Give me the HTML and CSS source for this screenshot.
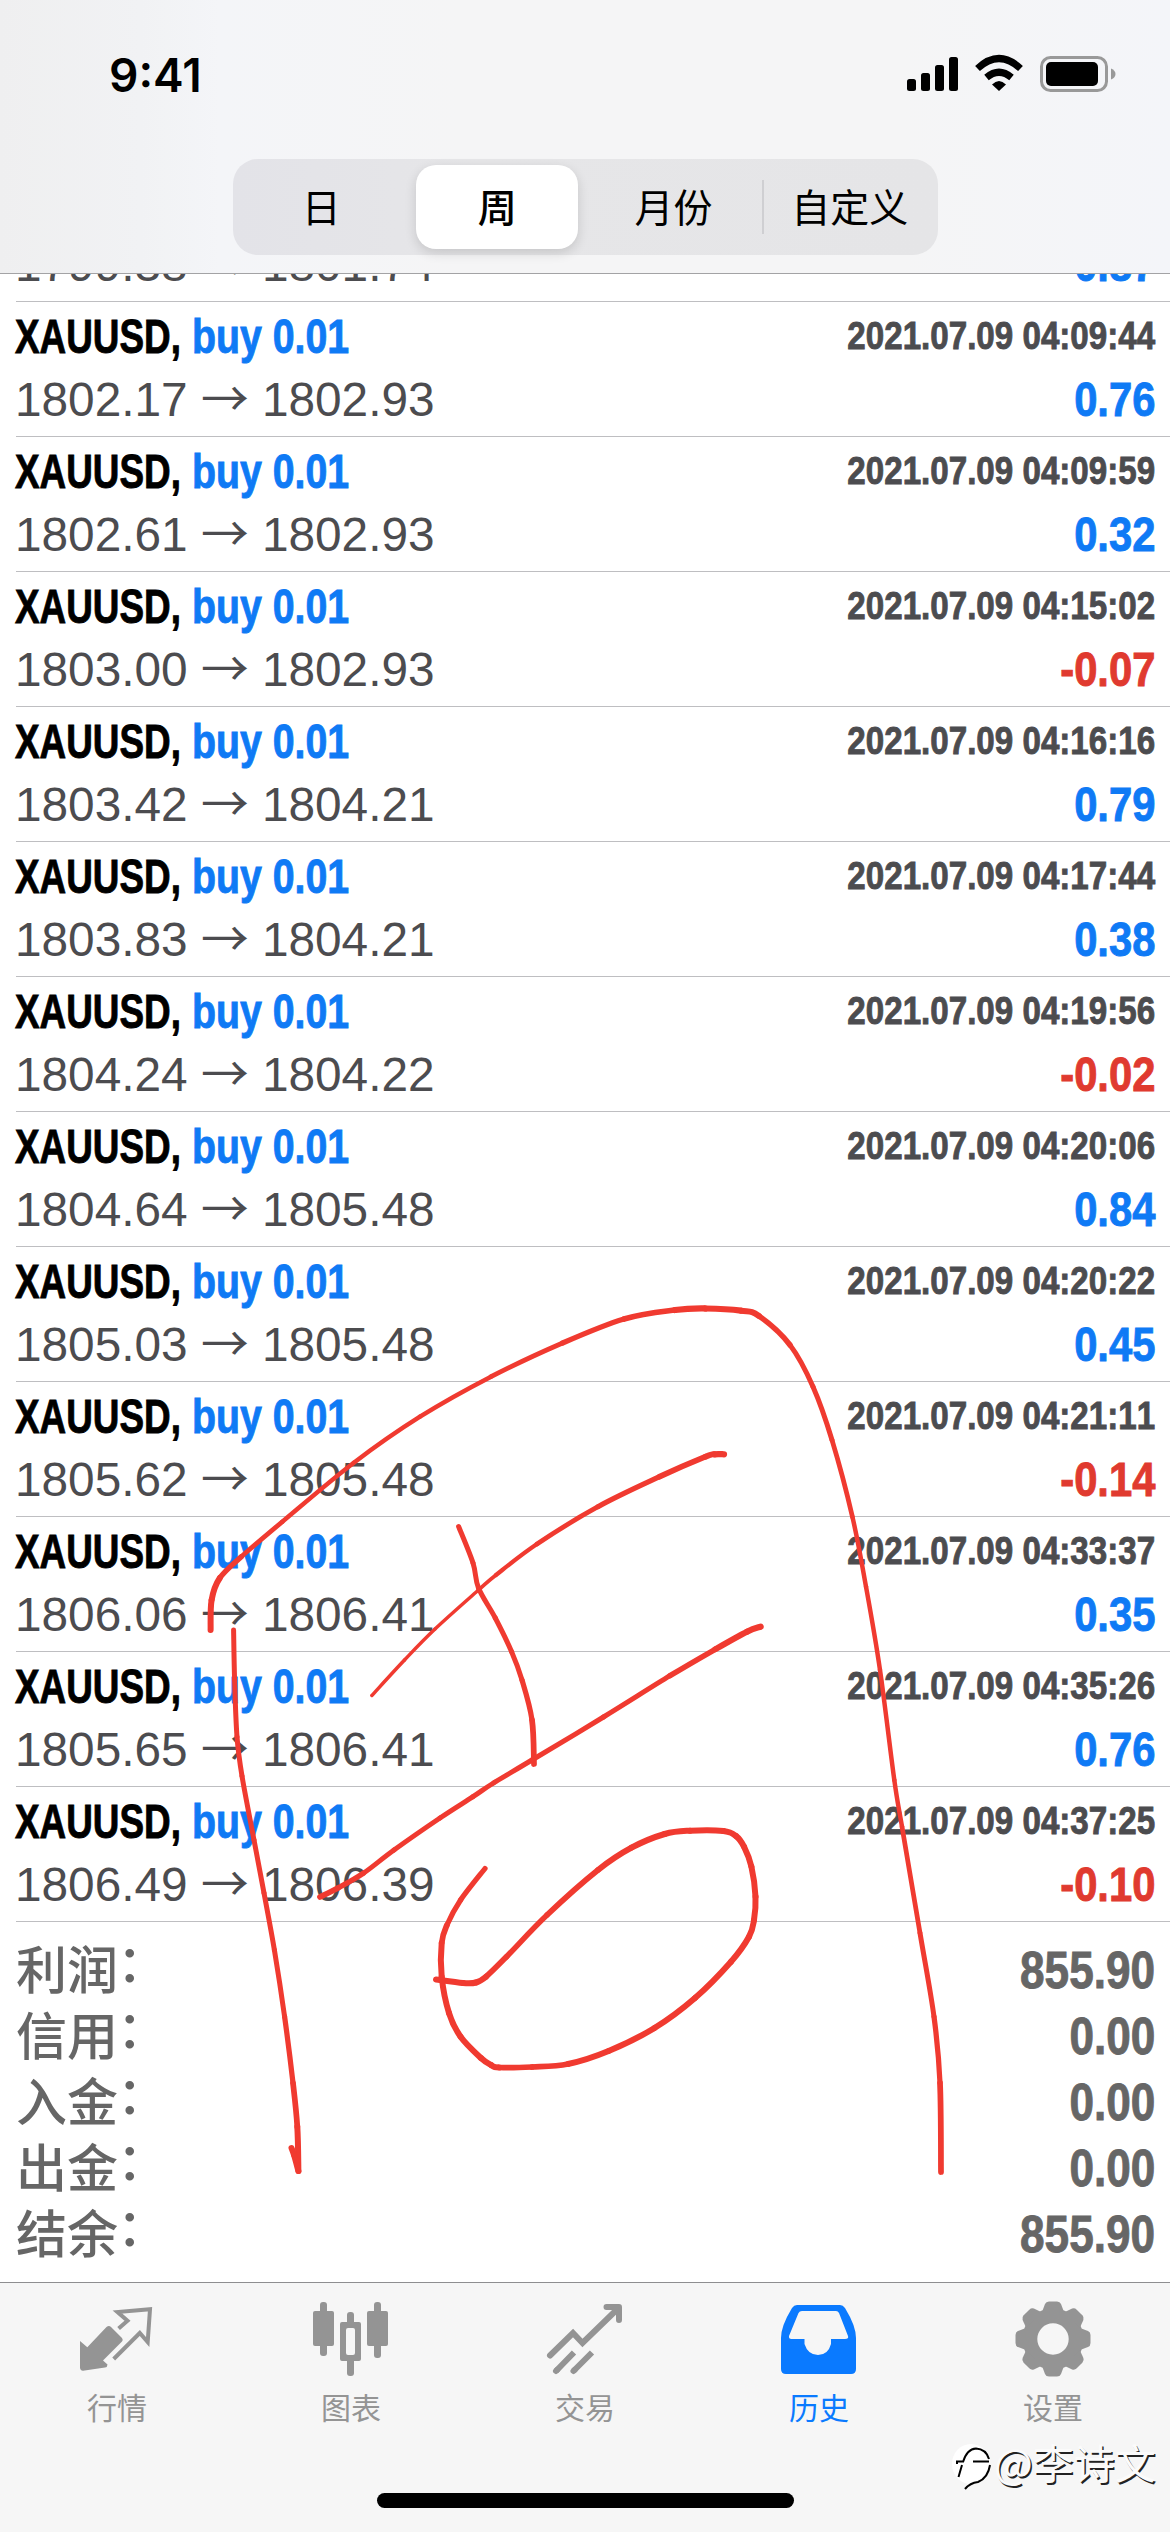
FILE: index.html
```html
<!DOCTYPE html>
<html lang="zh-CN">
<head>
<meta charset="utf-8">
<title>历史</title>
<link rel="stylesheet" href="styles.css">
</head>
<body>
<div class="screen">
  <header class="top">
    <div class="status">
      <span class="time">9:41</span>
      <svg class="status-icons" viewBox="900 50 220 48" width="220" height="48">
        <rect x="907" y="79" width="9" height="12" rx="2.5"/><rect x="921" y="73" width="9" height="18" rx="2.5"/><rect x="935" y="65" width="9" height="26" rx="2.5"/><rect x="949" y="57" width="9" height="34" rx="2.5"/>
        <path d="M977.500 68.500Q999 48.500 1020.500 68.500M986.500 77.500Q999 67 1011.500 77.500" fill="none" stroke="#000" stroke-width="7"/>
        <path d="M992 84.500Q999 77.500 1006 84.500L999 91Z"/>
        <rect x="1041.500" y="57.500" width="65" height="33" rx="9" fill="none" stroke="#999" stroke-width="3"/>
        <rect x="1046" y="62" width="52" height="24" rx="5"/>
        <path d="M1111 68.500Q1115.500 70.500 1115.500 74T1111 79.500Z" fill="#999"/>
      </svg>
    </div>
    <nav class="segments">
      <span class="seg">日</span><span class="seg on">周</span><span class="seg">月份</span><span class="seg split">自定义</span>
    </nav>
  </header>

  <main class="list">
    <div class="deal"><b class="sym">XAUUSD,</b><b class="side">buy 0.01</b><b class="date">2021.07.09 04:08:17</b><span class="price">1799.38 <i>→</i> 1801.74</span><b class="gain">0.87</b></div>
    <div class="deal"><b class="sym">XAUUSD,</b><b class="side">buy 0.01</b><b class="date">2021.07.09 04:09:44</b><span class="price">1802.17 <i>→</i> 1802.93</span><b class="gain">0.76</b></div>
    <div class="deal"><b class="sym">XAUUSD,</b><b class="side">buy 0.01</b><b class="date">2021.07.09 04:09:59</b><span class="price">1802.61 <i>→</i> 1802.93</span><b class="gain">0.32</b></div>
    <div class="deal"><b class="sym">XAUUSD,</b><b class="side">buy 0.01</b><b class="date">2021.07.09 04:15:02</b><span class="price">1803.00 <i>→</i> 1802.93</span><b class="gain loss">-0.07</b></div>
    <div class="deal"><b class="sym">XAUUSD,</b><b class="side">buy 0.01</b><b class="date">2021.07.09 04:16:16</b><span class="price">1803.42 <i>→</i> 1804.21</span><b class="gain">0.79</b></div>
    <div class="deal"><b class="sym">XAUUSD,</b><b class="side">buy 0.01</b><b class="date">2021.07.09 04:17:44</b><span class="price">1803.83 <i>→</i> 1804.21</span><b class="gain">0.38</b></div>
    <div class="deal"><b class="sym">XAUUSD,</b><b class="side">buy 0.01</b><b class="date">2021.07.09 04:19:56</b><span class="price">1804.24 <i>→</i> 1804.22</span><b class="gain loss">-0.02</b></div>
    <div class="deal"><b class="sym">XAUUSD,</b><b class="side">buy 0.01</b><b class="date">2021.07.09 04:20:06</b><span class="price">1804.64 <i>→</i> 1805.48</span><b class="gain">0.84</b></div>
    <div class="deal"><b class="sym">XAUUSD,</b><b class="side">buy 0.01</b><b class="date">2021.07.09 04:20:22</b><span class="price">1805.03 <i>→</i> 1805.48</span><b class="gain">0.45</b></div>
    <div class="deal"><b class="sym">XAUUSD,</b><b class="side">buy 0.01</b><b class="date">2021.07.09 04:21:11</b><span class="price">1805.62 <i>→</i> 1805.48</span><b class="gain loss">-0.14</b></div>
    <div class="deal"><b class="sym">XAUUSD,</b><b class="side">buy 0.01</b><b class="date">2021.07.09 04:33:37</b><span class="price">1806.06 <i>→</i> 1806.41</span><b class="gain">0.35</b></div>
    <div class="deal"><b class="sym">XAUUSD,</b><b class="side">buy 0.01</b><b class="date">2021.07.09 04:35:26</b><span class="price">1805.65 <i>→</i> 1806.41</span><b class="gain">0.76</b></div>
    <div class="deal"><b class="sym">XAUUSD,</b><b class="side">buy 0.01</b><b class="date">2021.07.09 04:37:25</b><span class="price">1806.49 <i>→</i> 1806.39</span><b class="gain loss">-0.10</b></div>
    <section class="totals">
      <div class="total"><span>利润<em>：</em></span><b>855.90</b></div>
      <div class="total"><span>信用<em>：</em></span><b>0.00</b></div>
      <div class="total"><span>入金<em>：</em></span><b>0.00</b></div>
      <div class="total"><span>出金<em>：</em></span><b>0.00</b></div>
      <div class="total"><span>结余<em>：</em></span><b>855.90</b></div>
    </section>
  </main>

  <footer class="tabs">
    <div class="tab">
      <svg viewBox="72 2295 90 90"><path fill="currentColor" d="M80 2341L87.300 2347.300L106.500 2327Q109 2325 111 2327L122 2338Q123.500 2340 122 2341.500L103 2360.500L107.500 2364.500Q107.500 2367 105 2367.500L83 2370.700Q80 2370.500 80 2367.500Z"/><path d="M118.600 2328.500L127.500 2320.700L117.500 2312L150 2309.300L147.700 2342L139.800 2333L113.700 2359" fill="none" stroke="currentColor" stroke-width="4"/></svg>
      行情
    </div>
    <div class="tab">
      <svg viewBox="306 2295 90 90" fill="currentColor"><rect x="313" y="2311" width="21" height="35" rx="2"/><rect x="320" y="2302" width="7" height="54" rx="3"/><path fill-rule="evenodd" d="M342 2322H359Q361 2322 361 2324V2359Q361 2361 359 2361H342Q340 2361 340 2359V2324Q340 2322 342 2322ZM348 2328Q346 2328 346 2330V2353Q346 2355 348 2355H353Q355 2355 355 2353V2330Q355 2328 353 2328Z"/><rect x="347" y="2312" width="7" height="14" rx="3"/><rect x="347" y="2357" width="7" height="19" rx="3"/><rect x="367" y="2311" width="21" height="35" rx="2"/><rect x="374" y="2302" width="7" height="56" rx="3"/></svg>
      图表
    </div>
    <div class="tab">
      <svg viewBox="540 2295 90 90" fill="none" stroke="currentColor" stroke-width="6"><path stroke-linecap="round" d="M550 2355.500L573 2333L582.500 2343L618 2308.500"/><path stroke-linecap="round" stroke-linejoin="round" d="M606.500 2307H619V2320"/><path d="M556 2371L574 2352.500M573.500 2371L592 2352.500"/><path stroke-linecap="round" d="M556 2371l1-1M573.500 2371l1-1"/></svg>
      交易
    </div>
    <div class="tab active">
      <svg viewBox="774 2295 90 90" fill="currentColor"><path fill-rule="evenodd" d="M797 2305H840Q843 2305 845 2308Q856 2326 856 2338V2369Q856 2374 851 2374H786Q781 2374 781 2369V2338Q781 2326 792 2308Q794 2305 797 2305ZM802 2311Q799.500 2311 798.500 2313L789 2336Q788.500 2339 791.500 2339H804.500V2344Q808 2355 818 2355T831 2344V2339H845Q849 2339 848 2336L839 2313Q838 2311 836 2311Z"/></svg>
      历史
    </div>
    <div class="tab">
      <svg viewBox="-45 -44 90 90" fill="currentColor"><path fill-rule="evenodd" d="M-30.500 0A30.500 30.500 0 1 0 30.500 0A30.500 30.500 0 1 0 -30.500 0ZM-15.700 0A15.700 15.700 0 1 1 15.700 0A15.700 15.700 0 1 1 -15.700 0Z"/><g id="teeth"><path id="tooth" d="M-11 -27L-8 -35Q-7 -37.500 -4 -37.500H4Q7 -37.500 8 -35L11 -27Z"/><use href="#tooth" transform="rotate(45)"/><use href="#tooth" transform="rotate(90)"/><use href="#tooth" transform="rotate(135)"/></g><use href="#teeth" transform="rotate(180)"/></svg>
      设置
    </div>
    <div class="home"></div>
  </footer>

  <svg class="ink" id="ink" viewBox="0 0 1170 2532" width="1170" height="2532"></svg>

  <div class="mark">
    <svg viewBox="950 2445 44 50" width="44" height="50"><ellipse cx="972" cy="2466" rx="19" ry="20" fill="#fff"/><path d="M964 2464Q968 2451 977 2450.500Q987 2451 990 2461M974 2463.500H990M991 2467Q989 2480 979 2484Q971 2485 966 2491M958 2466V2463.500H965M963 2467L959.500 2479" fill="none" stroke="#000" stroke-width="2"/></svg>
    <span>@李诗文</span>
  </div>
</div>
<script src="ink.js"></script>
</body>
</html>
```
FILE: styles.css
```css
* { box-sizing: border-box; }
body { margin: 0; background: #fff; }
.screen {
  position: relative;
  display: flex;
  flex-direction: column;
  width: 1170px;
  height: 2532px;
  overflow: hidden;
  font-family: "Liberation Sans", "Noto Sans CJK SC", sans-serif;
  font-kerning: none;
  color: #000;
}

.top {
  flex: none;
  height: 274px;
  border-bottom: 1px solid #a3a3a5;
  background: linear-gradient(90deg, #efeff0 0, #f1f2f4 140px, #f4f5f8 220px, #f5f5f6 460px, #f5f5f6 900px, #f4f5f9 1170px);
}
.status {
  display: flex;
  justify-content: space-between;
  align-items: flex-start;
  height: 159px;
  padding: 50px 50px 0 109px;
}
.time { font: 600 46px/50px Inter, sans-serif; letter-spacing: 0; }
.segments {
  display: flex;
  width: 705px;
  height: 96px;
  margin-left: 233px;
  padding: 6px 0;
  border-radius: 25px;
  background: linear-gradient(90deg, #e3e3e8, #e6e6e8 35%, #e5e5e7);
}
.seg {
  flex: 1;
  display: flex;
  align-items: center;
  justify-content: center;
  padding-bottom: 5px;
  font: 400 39px/58px "Noto Sans CJK SC", sans-serif;
}
.seg.on {
  flex: 0 0 162px;
  margin: 0 7px;
  border-radius: 20px;
  background: #fff;
  font-weight: 500;
  box-shadow: 0 4px 12px rgba(0, 0, 0, .14);
}
.split { background: linear-gradient(#cfcfd2, #cfcfd2) 0 50% / 2px 54px no-repeat; }

.list { flex: none; height: 2008px; overflow: hidden; }
.deal {
  display: grid;
  grid-template-columns: 177px 1fr 420px;
  grid-template-rows: 62px 72px;
  height: 135px;
  margin-left: 16px;
  padding-right: 16px;
  border-bottom: 1px solid #bebec1;
  white-space: nowrap;
}
.deal:first-child { margin-top: -107px; }
.deal b, .total b { -webkit-text-stroke: .9px currentColor; }
.sym, .side { font-size: 48px; line-height: 70px; transform-origin: 0 50%; }
.sym { transform: translateX(-1px) scaleX(.768); }
.side { color: #0f7af5; transform: translateX(-1px) scaleX(.818); }
.date { justify-self: end; color: #4c4c4f; font-size: 39px; line-height: 68px; transform: translateX(1px) scaleX(.85); transform-origin: 100% 50%; }
.price { grid-column: 1 / 3; color: #4c4c4f; font-size: 48px; line-height: 72px; transform: translateX(-1px) scaleX(.995); transform-origin: 0 50%; }
.price i { display: inline-block; width: 48px; font-family: "Noto Sans CJK SC", sans-serif; font-style: normal; line-height: 60px; }
.gain { justify-self: end; color: #0f7af5; font-size: 48px; line-height: 72px; transform: translateX(1px) scaleX(.87); transform-origin: 100% 50%; }
.loss { color: #e03a2f; }

.totals { padding: 16px 16px 0; color: #666; }
.total { display: flex; justify-content: space-between; height: 66px; line-height: 66px; }
.total span { font-family: "Noto Sans CJK SC", sans-serif; font-size: 51px; font-weight: 500; transform: translateY(-4px); }
.total em { display: inline-block; font-style: normal; transform: translate(-1px, -7px); }
.total b { font-size: 51px; transform: translateX(1px) scaleX(.865); transform-origin: 100% 50%; }

.tabs {
  flex: none;
  display: grid;
  grid-template-columns: repeat(5, 1fr);
  grid-template-rows: 210px 15px;
  height: 250px;
  border-top: 1px solid #8e8e90;
  background: #f6f6f6;
}
.tab {
  display: flex;
  flex-direction: column;
  align-items: center;
  padding-top: 12px;
  color: #949494;
  font: 400 30px/42px "Noto Sans CJK SC", sans-serif;
}
.tab svg { width: 90px; height: 90px; }
.tab.active { color: #0a7aff; }
.home { grid-column: 1 / -1; justify-self: center; width: 417px; border-radius: 8px; background: #000; }

.ink { position: absolute; left: 0; top: 0; pointer-events: none; }
.mark {
  position: absolute;
  left: 949px;
  top: 2440px;
  display: flex;
  align-items: center;
  gap: 1px;
  color: #fbfbfb;
  font: 400 41px/50px "Noto Sans CJK SC", sans-serif;
  text-shadow: 1.500px 1.500px 0 #222;
  white-space: nowrap;
}
.mark svg { transform: translateY(3px); }
.mark span { transform: translateY(-4px); }
```
FILE: ink.js
```javascript
// Each stroke is a list of [x, y, pen width]; points are joined by a Catmull-Rom curve.
const strokes = [
  [[210.6,1630,6],[211.6,1600,6],[219.8,1578,6],[241,1557,5],[282,1522,4.5],[353.5,1463,4.5],[420,1416.7,4.5],[491,1376.7,4.5],[562.6,1343,5],[624,1319,5.5],[675,1310,6],[705.5,1308.5,6.5],[741,1310.7,6],[759,1316,6],[790,1345,5],[813,1386.7,5],[832,1440,5],[852.4,1516.7,4.5],[866,1586.7,4.5],[880,1670,4.5],[894.3,1780,4.5],[902,1826.7,4.5],[920,1933,5],[934,2016.7,5],[940,2083,5.5],[941,2172,6]],
  [[233.6,1630,5],[234.6,1680,5],[237,1736.7,5],[242,1776,5],[254,1840,5],[264,1893,5],[274.4,1950,5],[284.6,2016.7,5],[293,2083,5.5],[297.3,2126.7,6],[298.4,2171,6]],
  [[298.4,2171,6],[294,2155,6],[291.5,2148,6]],
  [[371.8,1695.5,3.5],[404.500,1660,3.5],[435,1629,3.5],[478.500,1590,3.5],[496,1575,4],[537,1544,4.5],[598,1506.7,5],[659.6,1476.7,5.5],[705.5,1456.7,6],[714.7,1454.3,6],[724,1454.300,6.5]],
  [[458.6,1526.5,5],[473,1563,5],[478.5,1588,5],[495.3,1618,5],[511.6,1651.7,5],[522,1680,5],[532,1720,5.500],[534,1764,6]],
  [[760.6,1626.7,6.5],[747,1631.7,6],[715.7,1649,6],[670,1675.7,5],[603.5,1717,5],[532,1760,5],[493.5,1783,5],[473,1796.7,5],[440,1818,5],[394,1850,5],[363.700,1873,5],[338,1888,5.5],[320,1897,6]],
  [[485,1868.500,5.500],[460.6,1900,5],[447,1925,5.500],[441.7,1943,6],[441.7,1976.7,6],[449,2013,6],[460.6,2036.7,6],[481,2058,6],[491,2065,6],[499,2067.5,6],[532,2067,5.500],[568,2064,6],[608.6,2051,6],[654.5,2028,6],[695,1998,6],[731,1961.7,6],[749,1936.7,6],[754,1920,6],[755.5,1896.7,6],[751.4,1866.7,6],[744,1846.7,6],[736,1836,6],[723.4,1831,6],[690,1830.7,6],[664.7,1834,6],[631.5,1847.7,6],[598,1870,6],[547,1915,5.500],[506.5,1956.7,5.500],[486,1976.7,6],[476,1982.500,6],[463,1983,6],[436,1979.5,6]]
];
const ink = document.getElementById("ink");
for (const pts of strokes) {
  for (let i = 0; i < pts.length - 1; i++) {
    const a = pts[i - 1] || pts[i], b = pts[i], c = pts[i + 1], d = pts[i + 2] || c;
    const path = document.createElementNS("http://www.w3.org/2000/svg", "path");
    path.setAttribute("d", `M${b[0]} ${b[1]}C${b[0] + (c[0] - a[0]) / 6} ${b[1] + (c[1] - a[1]) / 6} ${c[0] - (d[0] - b[0]) / 6} ${c[1] - (d[1] - b[1]) / 6} ${c[0]} ${c[1]}`);
    path.setAttribute("fill", "none");
    path.setAttribute("stroke", "#f03a30");
    path.setAttribute("stroke-linecap", "round");
    path.setAttribute("stroke-width", (b[2] + c[2]) / 2);
    ink.appendChild(path);
  }
}
```
